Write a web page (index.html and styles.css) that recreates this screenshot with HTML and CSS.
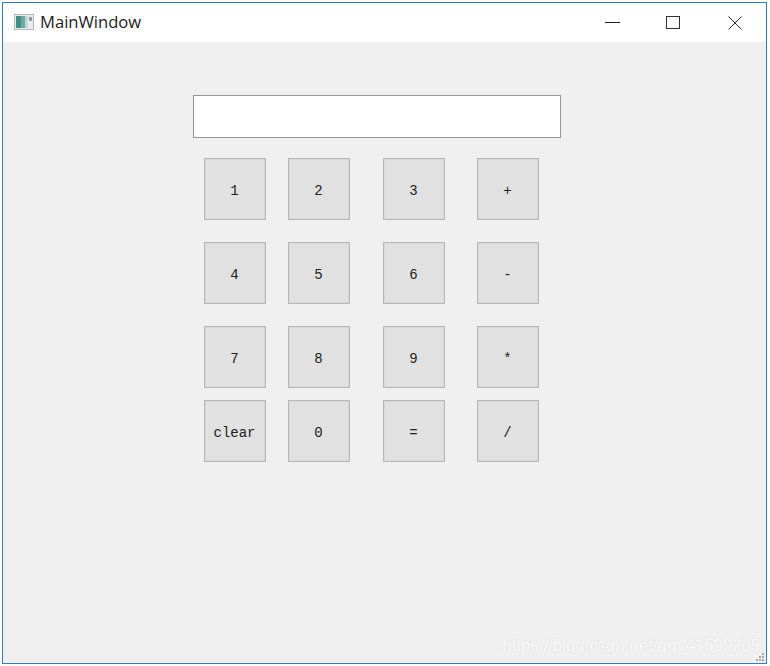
FILE: index.html

```html
<!DOCTYPE html>
<html lang="en">
<head>
    <meta charset="UTF-8">
    <title>MainWindow</title>
    <link rel="stylesheet" href="styles.css">
</head>
<body>

<div class="window">
    <header class="titlebar">
        <svg class="app-icon" width="20" height="16" viewBox="0 0 20 16">
            <rect x="0.5" y="0.5" width="19" height="15" fill="#e8ecec" stroke="#b4b8ba"/>
            <rect x="2" y="2" width="5" height="12" fill="#3f8f86"/>
            <rect x="7" y="2" width="4" height="12" fill="#6fa9a4"/>
            <rect x="11" y="2" width="3" height="12" fill="#c3d8d6"/>
            <rect x="15" y="3" width="3" height="4" fill="#8a9aa6"/>
        </svg>
        <span class="title">MainWindow</span>
        <div class="controls">
            <svg width="15" height="14" viewBox="0 0 15 14"><path d="M0 6.5H15" stroke="#222" fill="none"/></svg>
            <svg width="14" height="14" viewBox="0 0 14 14"><rect x="0.5" y="0.5" width="13" height="12" stroke="#333" fill="none"/></svg>
            <svg class="close" width="14" height="14" viewBox="0 0 14 14"><path d="M0.5 0.5L13.5 13.5M13.5 0.5L0.5 13.5" stroke="#333" fill="none"/></svg>
        </div>
    </header>

    <main class="content">
        <div class="display"></div>
        <div class="keypad">
            <button>1</button>
            <button>2</button>
            <button>3</button>
            <button>+</button>
            <button>4</button>
            <button>5</button>
            <button>6</button>
            <button>-</button>
            <button>7</button>
            <button>8</button>
            <button>9</button>
            <button>*</button>
            <button>clear</button>
            <button>0</button>
            <button>=</button>
            <button>/</button>
        </div>
    </main>

    <span class="watermark">https://blog.csdn.net/qq_41599205</span>
    <svg class="grip" width="10" height="10" viewBox="0 0 10 10">
        <path d="M7 1h2v2H7zM4 4h2v2H4zM7 4h2v2H7zM1 7h2v2H1zM4 7h2v2H4zM7 7h2v2H7z" fill="#a8a8a8"/>
    </svg>
</div>

</body>
</html>
```

FILE: styles.css

```css
html, body {
    margin: 0;
    padding: 0;
    height: 100%;
    background-color: #fff;
}
body {
    padding: 2px 3px 2px 2px;
    box-sizing: border-box;
    font-family: "Liberation Mono", monospace;
}
.window {
    position: relative;
    display: flex;
    flex-direction: column;
    height: 100%;
    box-sizing: border-box;
    border: 1px solid #2f7fb8;
    background-color: #f0f0f0;
    overflow: hidden;
}
.titlebar {
    display: flex;
    align-items: center;
    flex: 0 0 39px;
    box-sizing: border-box;
    padding: 0 0 2px 11px;
    background-color: #fff;
}
.title {
    margin-left: 6px;
    font-family: "Open Sans", "Liberation Sans", sans-serif;
    font-size: 16.6px;
    color: #222;
}
.controls {
    display: flex;
    align-items: center;
    gap: 46px;
    margin: 2px 24px 0 auto;
}
.close {
    margin-left: 2px;
}
.content {
    flex: 1;
    padding: 53px 0 0 190px;
}
.display {
    width: 366px;
    height: 41px;
    border: 1px solid #969696;
    background-color: #fff;
}
.keypad {
    display: grid;
    grid-template-columns: 84px 95px 94px 62px;
    grid-template-rows: 84px 84px 74px 62px;
    margin: 20px 0 0 11px;
}
.keypad button {
    width: 62px;
    height: 62px;
    padding: 3px 1px 0 0;
    border: 1px solid #b7b7b7;
    border-radius: 0;
    box-shadow: inset 0 0 0 1px #d9d9d9;
    background-color: #e1e1e1;
    font-family: "Liberation Mono", monospace;
    font-size: 14px;
    color: #222;
}
.watermark {
    position: absolute;
    right: 6px;
    bottom: 7px;
    font-family: "Liberation Sans", sans-serif;
    font-size: 16.8px;
    color: #f8f8f8;
    text-shadow: 0 0 2px #dcdcdc;
}
.grip {
    position: absolute;
    right: 1px;
    bottom: 1px;
}
```
